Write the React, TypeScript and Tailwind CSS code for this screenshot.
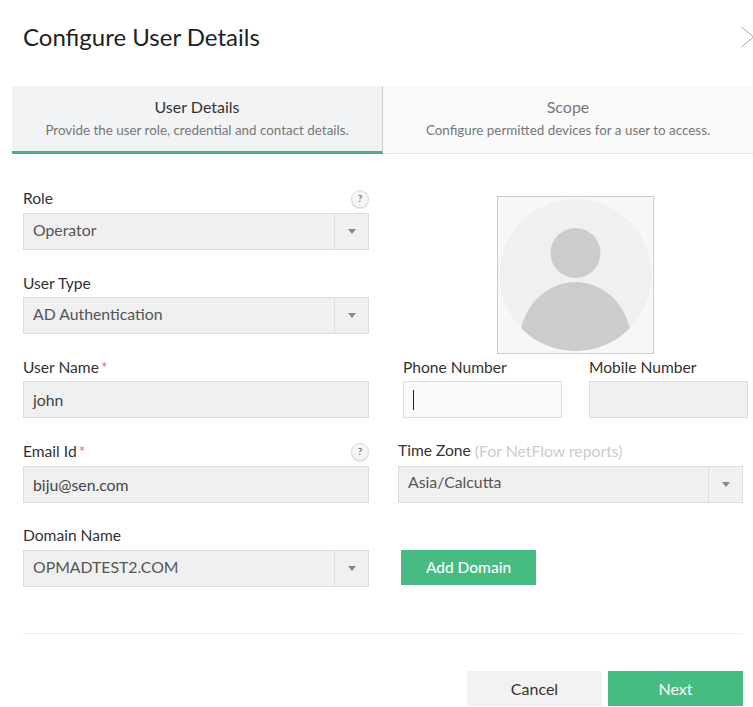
import type { ReactNode } from "react";

function Label({ children, required }: { children: ReactNode; required?: boolean }) {
  return (
    <span className="text-[15.6px] text-[#333]">
      {children}
      {required && <span className="ml-0.5 text-[#e0707a]">*</span>}
    </span>
  );
}

function Help() {
  return (
    <span className="flex size-[18px] items-center justify-center rounded-full border border-[#ddd] bg-[#f6f6f6] text-[10px] text-[#555] shadow-[0_1px_1px_#ddd]">
      ?
    </span>
  );
}

function Select({ value, tight }: { value: string; tight?: boolean }) {
  return (
    <div className="flex h-[37px] items-stretch border border-[#ddd] bg-[#f0f0f0]">
      <span className={`flex-1 pl-[9px] text-[15.8px] text-[#555] ${tight ? "leading-[29px]" : "leading-[31px]"}`}>{value}</span>
      <span className="flex w-[34px] items-center justify-center border-l border-[#ddd]">
        <span className="size-0 border-x-[4.5px] border-t-[5px] border-x-transparent border-t-[#888]" />
      </span>
    </div>
  );
}

function Input({ value }: { value: string }) {
  return (
    <div className="flex h-[37px] items-center border border-[#ddd] bg-[#f0f0f0] pl-[9px] text-[15.8px] text-[#444]">
      {value}
    </div>
  );
}

function Field({ label, required, help, low, children, className = "" }: {
  label: string;
  required?: boolean;
  help?: boolean;
  low?: boolean;
  children: ReactNode;
  className?: string;
}) {
  return (
    <div className={className}>
      <div className={`flex h-[30px] items-center justify-between ${low ? "pt-[3px]" : "pt-[1px]"}`}>
        <Label required={required}>{label}</Label>
        {help && <Help />}
      </div>
      {children}
    </div>
  );
}

function Avatar() {
  return (
    <div className="ml-[99px] mt-[13px] h-[158px] w-[157px] border border-[#ccc] bg-[#f7f7f7]">
      <svg viewBox="0 0 155 156" className="size-full">
        <defs>
          <clipPath id="avatar-clip">
            <circle cx="77.5" cy="78" r="76" />
          </clipPath>
        </defs>
        <circle cx="77.5" cy="78" r="76" fill="#f0f0f0" />
        <g clipPath="url(#avatar-clip)" fill="#cccccc">
          <circle cx="77.5" cy="56" r="25" />
          <ellipse cx="77.5" cy="146" rx="56" ry="61" />
        </g>
      </svg>
    </div>
  );
}

export default function App() {
  return (
    <div className="h-[707px] w-[753px] overflow-hidden bg-white font-['Lato',sans-serif]">
      <header className="flex h-[86px] items-center justify-between pb-[12px] pl-[23px]">
        <h1 className="text-2xl text-[#222]">Configure User Details</h1>
        <svg width="12" height="22" viewBox="0 0 12 22" fill="none" stroke="#aaa">
          <path d="M0.5 1l12 10-12 10" />
        </svg>
      </header>

      <div className="ml-3 flex h-[68px]">
        <div className="flex w-[371px] flex-col items-center border-b-[3px] border-r border-b-[#4caf82] border-r-[#ccc] bg-[#f2f3f5] pt-[9px]">
          <span className="text-[16px] text-[#333]">User Details</span>
          <span className="mt-px text-[13.4px] text-[#777]">Provide the user role, credential and contact details.</span>
        </div>
        <div className="flex flex-1 flex-col items-center border-b border-[#e5e5e5] bg-[#fafafa] pt-[9px]">
          <span className="text-[16px] text-[#777]">Scope</span>
          <span className="mt-px text-[13.4px] text-[#777]">Configure permitted devices for a user to access.</span>
        </div>
      </div>

      <div className="flex pl-[23px] pt-[29px]">
        <div className="w-[346px]">
          <Field label="Role" help>
            <Select value="Operator" />
          </Field>
          <Field label="User Type" low className="mt-[17px]">
            <Select value="AD Authentication" />
          </Field>
          <Field label="User Name" required low className="mt-[17px]">
            <Input value="john" />
          </Field>
          <Field label="Email Id" required help className="mt-[18px]">
            <Input value="biju@sen.com" />
          </Field>
          <Field label="Domain Name" className="mt-[17px]">
            <Select value="OPMADTEST2.COM" />
          </Field>
        </div>

        <div className="ml-[29px] w-[350px]">
          <Avatar />
          <div className="ml-[5px] flex gap-[27px]">
            <div className="w-[159px]">
              <div className="flex h-[27px] items-center">
                <Label>Phone Number</Label>
              </div>
              <div className="flex h-[37px] items-center border border-[#ddd] bg-[#fafafa] pl-[9px]">
                <span className="h-[20px] w-px bg-[#222]" />
              </div>
            </div>
            <div className="w-[159px]">
              <div className="flex h-[27px] items-center">
                <Label>Mobile Number</Label>
              </div>
              <div className="h-[37px] border border-[#ddd] bg-[#f0f0f0]" />
            </div>
          </div>
          <div className="mt-[18px] w-[345px]">
            <div className="flex h-[30px] items-center pb-[1px]">
              <Label>Time Zone</Label>
              <span className="ml-1 text-[15.8px] text-[#ccc]">(For NetFlow reports)</span>
            </div>
            <Select value="Asia/Calcutta" tight />
          </div>
          <button className="ml-[3px] mt-[47px] flex h-[35px] w-[135px] items-center justify-center bg-[#46bc82] text-[15.5px] font-medium text-white">
            Add Domain
          </button>
        </div>
      </div>

      <div className="ml-[23px] mt-[46px] w-[720px] border-t border-[#eee]" />

      <div className="mr-[10px] mt-[37px] flex justify-end gap-[6px]">
        <button className="h-[35px] w-[135px] bg-[#f2f2f2] text-[16px] text-[#333]">Cancel</button>
        <button className="h-[35px] w-[135px] bg-[#46bc82] text-[16px] text-white">Next</button>
      </div>
    </div>
  );
}
